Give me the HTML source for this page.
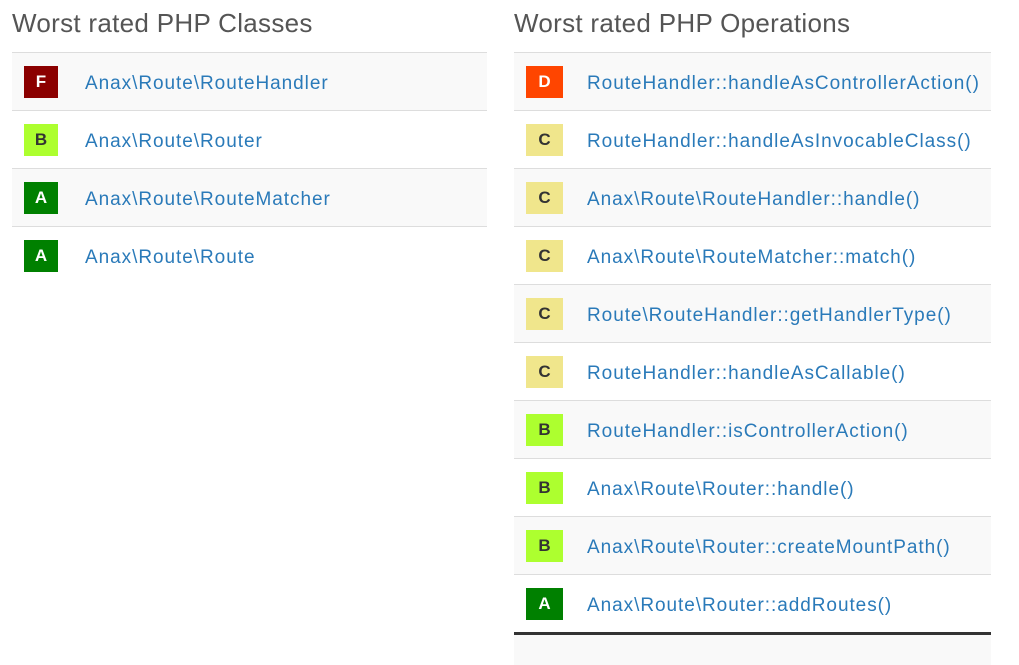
<!DOCTYPE html>
<html><head><style>
body{margin:0;width:1019px;height:656px;background:#fff;font-family:"Liberation Sans",sans-serif;position:relative;overflow:hidden}
h2{position:absolute;top:6px;margin:0;font-weight:normal;font-size:26px;color:#555;line-height:34px;letter-spacing:0.3px}
.t{position:absolute;top:52px;border-top:1px solid #ddd}
.r{height:57px;border-bottom:1px solid #ddd;position:relative}
.r:nth-child(odd){background:#f9f9f9}
.b{position:absolute;top:13px;left:12px;width:34px;height:32px;font-weight:bold;font-size:17px;line-height:32px;text-align:center;color:#fff}
.w .b{width:37px}
.n{position:absolute;left:73px;top:2px;line-height:58px;font-size:19px;color:#2a7ab9;letter-spacing:0.95px}
.F{background:#8b0000}.A{background:#008000}.D{background:#ff4500}
.B{background:#adff2f;color:#333}.C{background:#f0e68c;color:#333}
</style></head><body>
<h2 style="left:12px">Worst rated PHP Classes</h2>
<h2 style="left:514px">Worst rated PHP Operations</h2>
<div class="t" style="left:12px;width:475px">
<div class="r"><div class="b F">F</div><div class="n">Anax\Route\RouteHandler</div></div>
<div class="r"><div class="b B">B</div><div class="n">Anax\Route\Router</div></div>
<div class="r"><div class="b A">A</div><div class="n">Anax\Route\RouteMatcher</div></div>
<div class="r" style="border-bottom:none;background:#fff"><div class="b A">A</div><div class="n">Anax\Route\Route</div></div>
</div>
<div class="t w" style="left:514px;width:477px">
<div class="r"><div class="b D">D</div><div class="n">RouteHandler::handleAsControllerAction()</div></div>
<div class="r"><div class="b C">C</div><div class="n">RouteHandler::handleAsInvocableClass()</div></div>
<div class="r"><div class="b C">C</div><div class="n">Anax\Route\RouteHandler::handle()</div></div>
<div class="r"><div class="b C">C</div><div class="n">Anax\Route\RouteMatcher::match()</div></div>
<div class="r"><div class="b C">C</div><div class="n">Route\RouteHandler::getHandlerType()</div></div>
<div class="r"><div class="b C">C</div><div class="n">RouteHandler::handleAsCallable()</div></div>
<div class="r"><div class="b B">B</div><div class="n">RouteHandler::isControllerAction()</div></div>
<div class="r"><div class="b B">B</div><div class="n">Anax\Route\Router::handle()</div></div>
<div class="r"><div class="b B">B</div><div class="n">Anax\Route\Router::createMountPath()</div></div>
<div class="r" style="border-bottom:3px solid #333"><div class="b A">A</div><div class="n">Anax\Route\Router::addRoutes()</div></div>
<div style="height:30px;background:#f9f9f9"></div>
</div>
</body></html>
